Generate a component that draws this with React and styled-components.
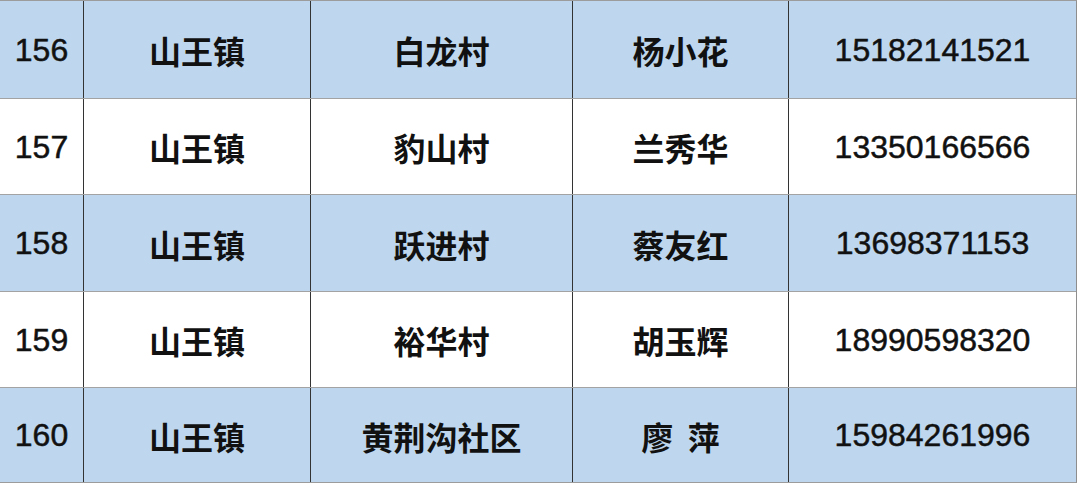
import React from 'react';
import styled, { createGlobalStyle } from 'styled-components';

const GlobalStyle = createGlobalStyle`
  html, body {
    margin: 0;
    padding: 0;
    background: #ffffff;
  }
`;

const Table = styled.div`
  width: 1077px;
  display: flex;
  flex-direction: column;
  border-top: 1px solid #9c9c9c;
  border-right: 1px solid #8e8e8e;
  border-bottom: 1px solid #9c9c9c;
  box-sizing: border-box;
`;

const Row = styled.div`
  display: grid;
  grid-template-columns: 83px 227px 262px 216px 1fr;
  height: ${p => p.$h}px;
  background: ${p => (p.$shaded ? '#bed7ee' : '#ffffff')};
  border-top: ${p => (p.$first ? 'none' : '1px solid #a3a3a3')};
  box-sizing: border-box;
`;

const Cell = styled.div`
  display: flex;
  align-items: center;
  justify-content: center;
  padding-top: 1px;
  border-left: ${p => (p.$first ? 'none' : '1px solid #333333')};
  color: #111;
  font-size: 32px;
  font-family: ${p => (p.$cjk
    ? '"Noto Sans CJK SC", "Liberation Sans", sans-serif'
    : '"Liberation Sans", Arial, sans-serif')};
  font-weight: ${p => (p.$cjk ? 700 : 400)};
  -webkit-text-stroke: ${p => (p.$cjk ? '0' : '0.5px #111')};
  white-space: pre;
`;

const rows = [
  ['156', '山王镇', '白龙村', '杨小花', '15182141521'],
  ['157', '山王镇', '豹山村', '兰秀华', '13350166566'],
  ['158', '山王镇', '跃进村', '蔡友红', '13698371153'],
  ['159', '山王镇', '裕华村', '胡玉辉', '18990598320'],
  ['160', '山王镇', '黄荆沟社区', '廖  萍', '15984261996'],
];

const heights = [97, 96, 97, 96, 95];

export default function App() {
  return (
    <>
      <GlobalStyle />
      <Table>
        {rows.map((r, i) => (
          <Row key={r[0]} $shaded={i % 2 === 0} $first={i === 0} $h={heights[i]}>
            <Cell $first>{r[0]}</Cell>
            <Cell $cjk>{r[1]}</Cell>
            <Cell $cjk>{r[2]}</Cell>
            <Cell $cjk>{r[3]}</Cell>
            <Cell>{r[4]}</Cell>
          </Row>
        ))}
      </Table>
    </>
  );
}
